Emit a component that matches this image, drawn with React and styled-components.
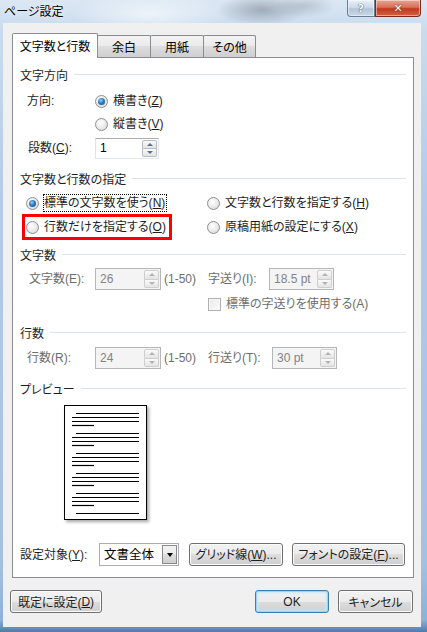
import React from 'react';
import styled, { createGlobalStyle } from 'styled-components';

const Global = createGlobalStyle`
  html, body { margin: 0; padding: 0; overflow: hidden; }
  body {
    font-family: "Liberation Sans", "Noto Sans CJK JP", sans-serif;
    font-size: 12px;
    font-feature-settings: "palt";
    color: #000;
  }
  * { box-sizing: border-box; }
`;

const Window = styled.div`
  width: 427px;
  height: 632px;
  display: flex;
  flex-direction: column;
  background:
    radial-gradient(ellipse 45px 16px at 262px 10px, rgba(95, 105, 115, 0.45), transparent),
    radial-gradient(ellipse 30px 12px at 305px 6px, rgba(130, 140, 150, 0.35), transparent),
    radial-gradient(ellipse 80px 20px at 150px 14px, rgba(255, 255, 255, 0.6), transparent),
    linear-gradient(180deg, #dbe7f3 0px, #c9dbee 30px, #b3cbe6 200px, #a6c0df 560px, #8fb0d8 620px, #4f7bb0 632px);
`;

const TitleBar = styled.div`
  height: 23px;
  display: flex;
  justify-content: space-between;
  align-items: flex-start;
  padding: 0 6px 0 4px;
`;

const TitleText = styled.span`
  margin-top: 3px;
  font-family: "Noto Sans CJK JP", sans-serif;
  font-size: 12px;
  line-height: 16px;
  color: #000;
  text-shadow: 0 0 6px rgba(255, 255, 255, 0.9);
`;

const CaptionGroup = styled.div`
  display: flex;
`;

const CaptionButton = styled.div`
  width: ${p => p.w}px;
  height: 17px;
  display: flex;
  align-items: center;
  justify-content: center;
  border: 1px solid ${p => (p.close ? '#7a2a1e' : '#6b7d93')};
  border-top: none;
  border-radius: 0 0 ${p => (p.close ? '4px 0' : '0 4px')};
  background: ${p =>
    p.close
      ? 'linear-gradient(180deg, #e8a594 0%, #d7705b 45%, #c2391f 55%, #d2623d 100%)'
      : 'linear-gradient(180deg, #e9eff6 0%, #cfdbe9 45%, #b4c5da 55%, #c9d7e7 100%)'};
  box-shadow: inset 0 0 0 1px rgba(255, 255, 255, 0.45);
  color: #fff;
  text-shadow: ${p => (p.close ? '0 0 2px #5a1a10' : '0 0 1px #3a4a5e, 0 0 1px #3a4a5e')};
  font-family: "DejaVu Sans", sans-serif;
  font-weight: bold;
  font-size: 11px;
`;

const Client = styled.div`
  flex: 1;
  margin: 0 6px 5px 3px;
  background: #f0f0f0;
  padding: 10px 8px 14px 9px;
  display: flex;
  flex-direction: column;
`;

const TabBar = styled.div`
  height: 24px;
  display: flex;
  align-items: flex-end;
`;

const Tab = styled.div`
  width: ${p => p.w}px;
  height: ${p => (p.active ? 25 : 22)}px;
  margin-bottom: ${p => (p.active ? -1 : 0)}px;
  margin-left: ${p => (p.first ? 0 : -1)}px;
  position: relative;
  z-index: ${p => (p.active ? 2 : 1)};
  border: 1px solid #898c95;
  border-bottom: none;
  border-radius: 2px 2px 0 0;
  background: ${p =>
    p.active ? '#fff' : 'linear-gradient(180deg, #f3f3f3 0%, #ebebeb 45%, #dddddd 50%, #cfcfcf 100%)'};
  display: flex;
  align-items: center;
  justify-content: center;
  padding-bottom: ${p => (p.active ? 2 : 0)}px;
  font-size: 12px;
`;

const Panel = styled.div`
  flex: 1;
  width: 402px;
  border: 1px solid #898c95;
  background: #fff;
  display: flex;
  flex-direction: column;
  position: relative;
  z-index: 1;
`;

const Row = styled.div`
  height: ${p => p.h || 22}px;
  margin-top: ${p => p.mt || 0}px;
  padding-left: ${p => p.pl || 0}px;
  display: flex;
  align-items: center;
  line-height: 16px;
  flex-shrink: 0;
`;

const Header = styled.div`
  height: 22px;
  margin-top: ${p => p.mt || 0}px;
  padding: 0 7px;
  display: flex;
  align-items: center;
  flex-shrink: 0;
  color: #1e1e1e;
  &::after {
    content: "";
    flex: 1;
    height: 1px;
    margin-left: 6px;
    background: #dde2e6;
  }
`;

const Label = styled.span`
  width: ${p => p.w}px;
  flex-shrink: 0;
  color: ${p => (p.dim ? '#6d6d6d' : '#1e1e1e')};
  white-space: nowrap;
`;

const Radio = styled.span`
  width: 13px;
  height: 13px;
  flex-shrink: 0;
  border-radius: 50%;
  border: 1px solid #8e8f8f;
  background: radial-gradient(circle at 40% 35%, #ffffff 0%, #f0f0f0 40%, #cfd0d1 100%);
  display: flex;
  align-items: center;
  justify-content: center;
  &::after {
    content: "";
    display: ${p => (p.checked ? 'block' : 'none')};
    width: 7px;
    height: 7px;
    border-radius: 50%;
    background: radial-gradient(circle at 40% 35%, #8fd3f5 0%, #2d7cc4 45%, #16477e 100%);
  }
`;

const CheckBox = styled.span`
  width: 13px;
  height: 13px;
  flex-shrink: 0;
  border: 1px solid #b1b1b1;
  background: linear-gradient(135deg, #e9e9e9, #fbfbfb);
  box-shadow: inset 0 0 0 1px #f6f6f6;
`;

const Option = styled.span`
  display: inline-flex;
  align-items: center;
  gap: 4px;
  outline: ${p => (p.marked ? '3px solid #ff0000' : 'none')};
  outline-offset: 1px;
  color: ${p => (p.dim ? '#6d6d6d' : '#1e1e1e')};
`;

const OptionText = styled.span`
  border: 1px ${p => (p.focus ? 'dotted #000' : 'solid transparent')};
  padding: 0 1px 0 0;
  line-height: 16px;
  white-space: nowrap;
`;

const Cell = styled.div`
  width: ${p => p.w}px;
  flex-shrink: 0;
  display: flex;
  align-items: center;
`;

const U = styled.span`
  text-decoration: underline;
`;

const SpinBox = styled.div`
  width: ${p => p.w}px;
  height: ${p => p.h || 22}px;
  flex-shrink: 0;
  display: flex;
  align-items: center;
  border: 1px solid ${p => (p.disabled ? '#b4b7ba' : '#abadb3')};
  border-color: ${p => (p.disabled ? '#b4b7ba' : '#abadb3 #e3e9ef #e3e9ef #e2e3ea')};
  background: ${p => (p.disabled ? '#f4f4f4' : '#fff')};
  padding: 0 1px 0 4px;
  color: ${p => (p.disabled ? '#838383' : '#000')};
`;

const SpinValue = styled.span`
  flex: 1;
  white-space: nowrap;
`;

const Spinner = styled.div`
  width: 15px;
  height: ${p => p.h || 18}px;
  display: flex;
  flex-direction: column;
`;

const SpinHalf = styled.div`
  flex: 1;
  border: 1px solid ${p => (p.disabled ? '#cfcfcf' : '#b8bcc4')};
  border-top-width: ${p => (p.down ? 0 : 1)}px;
  border-radius: ${p => (p.down ? '0 0 2px 2px' : '2px 2px 0 0')};
  background: linear-gradient(180deg, #fafafa, #e4e4e4);
  display: flex;
  align-items: center;
  justify-content: center;
  &::after {
    content: "";
    width: 0;
    height: 0;
    border-left: 3px solid transparent;
    border-right: 3px solid transparent;
    ${p =>
      p.down
        ? `border-top: 3px solid ${p.disabled ? '#b3b3b3' : '#5b6f97'};`
        : `border-bottom: 3px solid ${p.disabled ? '#b3b3b3' : '#5b6f97'};`}
  }
`;

const Note = styled.span`
  width: ${p => p.w}px;
  flex-shrink: 0;
  padding-left: 3px;
  color: #6d6d6d;
  white-space: nowrap;
`;

const PreviewWrap = styled.div`
  margin-top: 6px;
  margin-left: 51px;
  flex-shrink: 0;
`;

const Page = styled.div`
  width: 83px;
  height: 115px;
  border: 1px solid #000;
  background: #fff;
  box-shadow: 2px 2px 3px rgba(0, 0, 0, 0.35);
  display: flex;
`;

const SelectBox = styled.div`
  width: 80px;
  height: 23px;
  flex-shrink: 0;
  display: flex;
  align-items: stretch;
  border: 1px solid #abadb3;
  background: #fff;
  padding: 1px;
`;

const SelectValue = styled.span`
  flex: 1;
  padding-left: 3px;
  display: flex;
  align-items: center;
  font-size: 12.5px;
`;

const SelectArrow = styled.div`
  width: 15px;
  border: 1px solid #8a8a8a;
  background: linear-gradient(180deg, #f2f2f2 0%, #ebebeb 50%, #dddddd 50%, #cfcfcf 100%);
  display: flex;
  align-items: center;
  justify-content: center;
  &::after {
    content: "";
    border-left: 3.5px solid transparent;
    border-right: 3.5px solid transparent;
    border-top: 4px solid #000;
  }
`;

const Button = styled.div`
  width: ${p => p.w}px;
  height: 23px;
  flex-shrink: 0;
  margin-left: ${p => p.ml || 0}px;
  display: flex;
  align-items: center;
  justify-content: center;
  border: 1px solid ${p => (p.primary ? '#3c7fb1' : '#707070')};
  border-radius: 3px;
  background: linear-gradient(180deg, #f2f2f2 0%, #ebebeb 50%, #dddddd 50%, #cfcfcf 100%);
  box-shadow: ${p =>
    p.primary ? 'inset 0 0 0 1px #9fd3f4, inset 0 0 3px 2px #c6e6fa' : 'inset 0 0 0 1px #fcfcfc'};
  color: #1e1e1e;
  font-size: 12px;
  white-space: nowrap;
`;

const ButtonBar = styled.div`
  height: 23px;
  margin-top: 12px;
  margin-left: -2px;
  display: flex;
  align-items: center;
  flex-shrink: 0;
`;

const Spacer = styled.div`
  flex: 1;
`;

function Spin({ w, h, value, disabled, sh }) {
  return (
    <SpinBox w={w} h={h} disabled={disabled}>
      <SpinValue>{value}</SpinValue>
      <Spinner h={sh}>
        <SpinHalf disabled={disabled} />
        <SpinHalf down disabled={disabled} />
      </Spinner>
    </SpinBox>
  );
}

function PreviewLines() {
  const lines = [];
  for (let g = 0; g < 5; g++) {
    const y0 = 7.5 + g * 20;
    lines.push(<line key={`a${g}`} x1="11" x2="74" y1={y0} y2={y0} />);
    lines.push(<line key={`b${g}`} x1="7" x2="74" y1={y0 + 4} y2={y0 + 4} />);
    lines.push(<line key={`c${g}`} x1="7" x2="74" y1={y0 + 8} y2={y0 + 8} />);
    lines.push(<line key={`d${g}`} x1="7" x2="29" y1={y0 + 12} y2={y0 + 12} />);
  }
  lines.push(<line key="last" x1="11" x2="74" y1={107.5} y2={107.5} />);
  return (
    <svg width="81" height="113" viewBox="0 0 81 113">
      <g stroke="#000" strokeWidth="1.2">{lines}</g>
    </svg>
  );
}

export default function App() {
  return (
    <>
      <Global />
      <Window>
        <TitleBar>
          <TitleText>ページ設定</TitleText>
          <CaptionGroup>
            <CaptionButton w={28}>?</CaptionButton>
            <CaptionButton w={46} close>✕</CaptionButton>
          </CaptionGroup>
        </TitleBar>
        <Client>
          <TabBar>
            <Tab w={86} active first>文字数と行数</Tab>
            <Tab w={54}>余白</Tab>
            <Tab w={54}>用紙</Tab>
            <Tab w={53}>その他</Tab>
          </TabBar>
          <Panel>
            <Header mt={5}>文字方向</Header>
            <Row mt={5} pl={14}>
              <Label w={68}>方向:</Label>
              <Option>
                <Radio checked />
                <OptionText>横書き(<U>Z</U>)</OptionText>
              </Option>
            </Row>
            <Row mt={1} pl={82}>
              <Option>
                <Radio />
                <OptionText>縦書き(<U>V</U>)</OptionText>
              </Option>
            </Row>
            <Row mt={2} pl={15}>
              <Label w={67}>段数(<U>C</U>):</Label>
              <Spin w={64} h={21} value="1" sh={17} />
            </Row>

            <Header mt={8}>文字数と行数の指定</Header>
            <Row mt={3} pl={13}>
              <Cell w={181}>
                <Option>
                  <Radio checked />
                  <OptionText focus>標準の文字数を使う(<U>N</U>)</OptionText>
                </Option>
              </Cell>
              <Cell>
                <Option>
                  <Radio />
                  <OptionText>文字数と行数を指定する(<U>H</U>)</OptionText>
                </Option>
              </Cell>
            </Row>
            <Row mt={2} pl={13}>
              <Cell w={181}>
                <Option marked>
                  <Radio />
                  <OptionText>行数だけを指定する(<U>O</U>)</OptionText>
                </Option>
              </Cell>
              <Cell>
                <Option>
                  <Radio />
                  <OptionText>原稿用紙の設定にする(<U>X</U>)</OptionText>
                </Option>
              </Cell>
            </Row>

            <Header mt={5}>文字数</Header>
            <Row mt={3} pl={16}>
              <Label w={66} dim>文字数(E):</Label>
              <Spin w={66} value="26" disabled />
              <Note w={47}>(1-50)</Note>
              <Label w={61} dim>字送り(I):</Label>
              <Spin w={65} value="18.5 pt" disabled />
            </Row>
            <Row mt={3} pl={195}>
              <Option dim>
                <CheckBox />
                <OptionText>標準の字送りを使用する(A)</OptionText>
              </Option>
            </Row>

            <Header mt={6}>行数</Header>
            <Row mt={4} pl={14}>
              <Label w={68} dim>行数(R):</Label>
              <Spin w={66} value="24" disabled />
              <Note w={47}>(1-50)</Note>
              <Label w={64} dim>行送り(T):</Label>
              <Spin w={65} value="30 pt" disabled />
            </Row>

            <Header mt={8}>プレビュー</Header>
            <PreviewWrap>
              <Page>
                <PreviewLines />
              </Page>
            </PreviewWrap>

            <Row mt={23} h={23} pl={7}>
              <Label w={79}>設定対象(<U>Y</U>):</Label>
              <SelectBox>
                <SelectValue>文書全体</SelectValue>
                <SelectArrow />
              </SelectBox>
              <Button w={94} ml={10}>グリッド線(<U>W</U>)...</Button>
              <Button w={113} ml={9}>フォントの設定(<U>F</U>)...</Button>
            </Row>
          </Panel>
          <ButtonBar>
            <Button w={92}>既定に設定(<U>D</U>)</Button>
            <Spacer />
            <Button w={74} primary>OK</Button>
            <Button w={75} ml={9}>キャンセル</Button>
          </ButtonBar>
        </Client>
      </Window>
    </>
  );
}
